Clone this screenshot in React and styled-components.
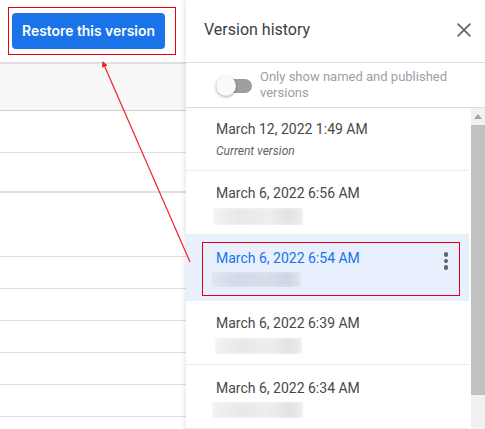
import React from "react";
import styled, { createGlobalStyle } from "styled-components";

const Global = createGlobalStyle`
  html, body { margin: 0; padding: 0; background: #fff; overflow: hidden; }
  * { box-sizing: border-box; }
`;

const Page = styled.div`
  position: relative;
  width: 485px;
  height: 429px;
  display: flex;
  overflow: hidden;
  font-family: Roboto, "Liberation Sans", sans-serif;
  background: #fff;
`;

const LeftPane = styled.div`
  width: 186px;
  flex: none;
  display: flex;
  flex-direction: column;
`;

const Toolbar = styled.div`
  height: 64px;
  flex: none;
  padding: 13px 0 0 12px;
  border-bottom: 2px solid #e0e0e0;
`;

const RestoreButton = styled.button`
  width: 153px;
  height: 36px;
  border: 0;
  border-radius: 4px;
  padding: 0;
  background: #1a73e8;
  color: #fff;
  font-family: Inter, Roboto, sans-serif;
  font-weight: 600;
  font-size: 13.9px;
`;

const SheetRow = styled.div`
  height: ${p => p.$h}px;
  flex: none;
  background: ${p => p.$shaded ? "#f8f8f8" : "#fff"};
  border-bottom: ${p => p.$thick ? 2 : 1}px solid ${p => p.$dark ? "#cfcfcf" : "#e0e0e0"};
`;

const Panel = styled.aside`
  flex: 1;
  display: flex;
  flex-direction: column;
  background: #fff;
  box-shadow: 0 0 6px rgba(0, 0, 0, 0.16);
  z-index: 1;
`;

const PanelHead = styled.div`
  height: 63px;
  flex: none;
  display: flex;
  align-items: center;
  justify-content: space-between;
  padding: 0 14px 3px 18px;
  border-bottom: 1px solid #dadce0;
`;

const Title = styled.h2`
  margin: 0;
  font-weight: 400;
  font-size: 16px;
  color: #3c4043;
`;

const CloseButton = styled.div`
  display: flex;
  color: #5f6368;
`;

const FilterRow = styled.div`
  height: 45px;
  flex: none;
  display: flex;
  padding: 6px 20px 0 30px;
  gap: 8px;
  border-bottom: 1px solid #dadce0;
`;

const Switch = styled.div`
  position: relative;
  width: 36px;
  height: 14px;
  flex: none;
  margin-top: 10px;
  border-radius: 7px;
  background: #9e9e9e;
`;

const Knob = styled.div`
  position: absolute;
  left: 0;
  top: -3px;
  width: 20px;
  height: 20px;
  border-radius: 50%;
  background: #fafafa;
  box-shadow: 0 1px 3px rgba(0, 0, 0, 0.35);
`;

const FilterLabel = styled.div`
  font-size: 13px;
  line-height: 16px;
  color: #9aa0a6;
`;

const ListArea = styled.div`
  flex: 1;
  min-height: 0;
  display: flex;
`;

const List = styled.div`
  flex: 1;
  min-width: 0;
`;

const Item = styled.div`
  position: relative;
  height: ${p => p.$h}px;
  padding: ${p => p.$top}px 0 0 30px;
  background: ${p => p.$selected ? "#e8f0fe" : "#fff"};
  border-bottom: 1px solid ${p => p.$selected ? "transparent" : "#ececec"};
`;

const Stamp = styled.div`
  font-size: 14px;
  line-height: 18px;
  color: ${p => p.$selected ? "#1a73e8" : "#484848"};
`;

const Note = styled.div`
  margin-top: 5px;
  font-size: 12px;
  line-height: 16px;
  font-style: italic;
  color: #5f6368;
`;

const Redacted = styled.div`
  width: ${p => p.$w}px;
  height: ${p => p.$h}px;
  margin: ${p => p.$mt}px 0 0 ${p => p.$ml}px;
  background: ${p => p.$selected
    ? "linear-gradient(90deg,#dfe5f1,#d2d9e7 30%,#d8deeb 60%,#ced5e3 85%,#dfe5f1)"
    : "linear-gradient(90deg,#f2f2f2,#e8e8e8 30%,#eeeeee 60%,#e2e2e2 85%,#eeeeee)"};
  box-shadow: inset 0 0 4px ${p => p.$selected ? "rgba(232,240,254,0.7)" : "rgba(255,255,255,0.6)"};
`;

const MoreButton = styled.div`
  position: absolute;
  right: 21px;
  top: 17px;
  display: flex;
  flex-direction: column;
  gap: 2px;
`;

const Dot = styled.span`
  width: 4.5px;
  height: 4.5px;
  border-radius: 50%;
  background: #5f6368;
`;

const Scrollbar = styled.div`
  width: 14px;
  flex: none;
  margin-left: 2px;
  background: #f1f1f1;
  display: flex;
  flex-direction: column;
`;

const ScrollArrow = styled.div`
  height: 17px;
  flex: none;
  display: flex;
  align-items: center;
  justify-content: center;
  background: #f1f1f1;
`;

const ScrollThumb = styled.div`
  height: 270px;
  background: #c1c1c1;
`;

const RedBox = styled.div`
  position: absolute;
  left: ${p => p.$x}px;
  top: ${p => p.$y}px;
  width: ${p => p.$w}px;
  height: ${p => p.$h}px;
  border: 1px solid #e60012;
  z-index: 3;
`;

const ArrowLayer = styled.svg`
  position: absolute;
  left: 0;
  top: 0;
  z-index: 3;
  pointer-events: none;
`;

const versions = [
  { stamp: "March 12, 2022 1:49 AM", h: 63, top: 12, note: "Current version" },
  { stamp: "March 6, 2022 6:56 AM", h: 64, top: 13, blur: { w: 90, h: 17, mt: 6, ml: -3 } },
  { stamp: "March 6, 2022 6:54 AM", h: 66, top: 14, selected: true, blur: { w: 89, h: 15, mt: 5, ml: -4 } },
  { stamp: "March 6, 2022 6:39 AM", h: 64, top: 13, blur: { w: 87, h: 16, mt: 6, ml: -1 } },
  { stamp: "March 6, 2022 6:34 AM", h: 64, top: 14, blur: { w: 91, h: 16, mt: 5, ml: -4 } },
];

export default function App() {
  return (
    <Page>
      <Global />
      <LeftPane>
        <Toolbar>
          <RestoreButton>Restore this version</RestoreButton>
        </Toolbar>
        <SheetRow $h={47} $shaded $dark />
        <SheetRow $h={42} />
        <SheetRow $h={40} $thick />
        <SheetRow $h={64} />
        <SheetRow $h={32} />
        <SheetRow $h={32} />
        <SheetRow $h={32} />
        <SheetRow $h={32} />
        <SheetRow $h={32} />
      </LeftPane>
      <Panel>
        <PanelHead>
          <Title>Version history</Title>
          <CloseButton>
            <svg width="14" height="14" viewBox="0 0 14 14" fill="none" stroke="currentColor" strokeWidth="1.6">
              <path d="M.6.6 13.4 13.4M13.4.6.6 13.4" />
            </svg>
          </CloseButton>
        </PanelHead>
        <FilterRow>
          <Switch><Knob /></Switch>
          <FilterLabel>Only show named and published versions</FilterLabel>
        </FilterRow>
        <ListArea>
          <List>
            {versions.map(v => (
              <Item key={v.stamp} $h={v.h} $top={v.top} $selected={v.selected}>
                <Stamp $selected={v.selected}>{v.stamp}</Stamp>
                {v.note && <Note>{v.note}</Note>}
                {v.blur && (
                  <Redacted $w={v.blur.w} $h={v.blur.h} $mt={v.blur.mt} $ml={v.blur.ml} $selected={v.selected} />
                )}
                {v.selected && (
                  <MoreButton><Dot /><Dot /><Dot /></MoreButton>
                )}
              </Item>
            ))}
          </List>
          <Scrollbar>
            <ScrollArrow>
              <svg width="8" height="5" viewBox="0 0 8 5"><path d="M4 0 8 5H0Z" fill="#a3a3a3" /></svg>
            </ScrollArrow>
            <ScrollThumb />
          </Scrollbar>
        </ListArea>
      </Panel>
      <RedBox $x={8} $y={7} $w={168} $h={48} />
      <RedBox $x={202} $y={242} $w={258} $h={54} />
      <ArrowLayer width="485" height="429" viewBox="0 0 485 429">
        <path d="M190 262 104.5 66" stroke="#f01c24" strokeWidth="1.15" fill="none" />
        <path d="M102.5 61 107.5 65.5 102 67.8Z" fill="#f01c24" />
      </ArrowLayer>
    </Page>
  );
}
